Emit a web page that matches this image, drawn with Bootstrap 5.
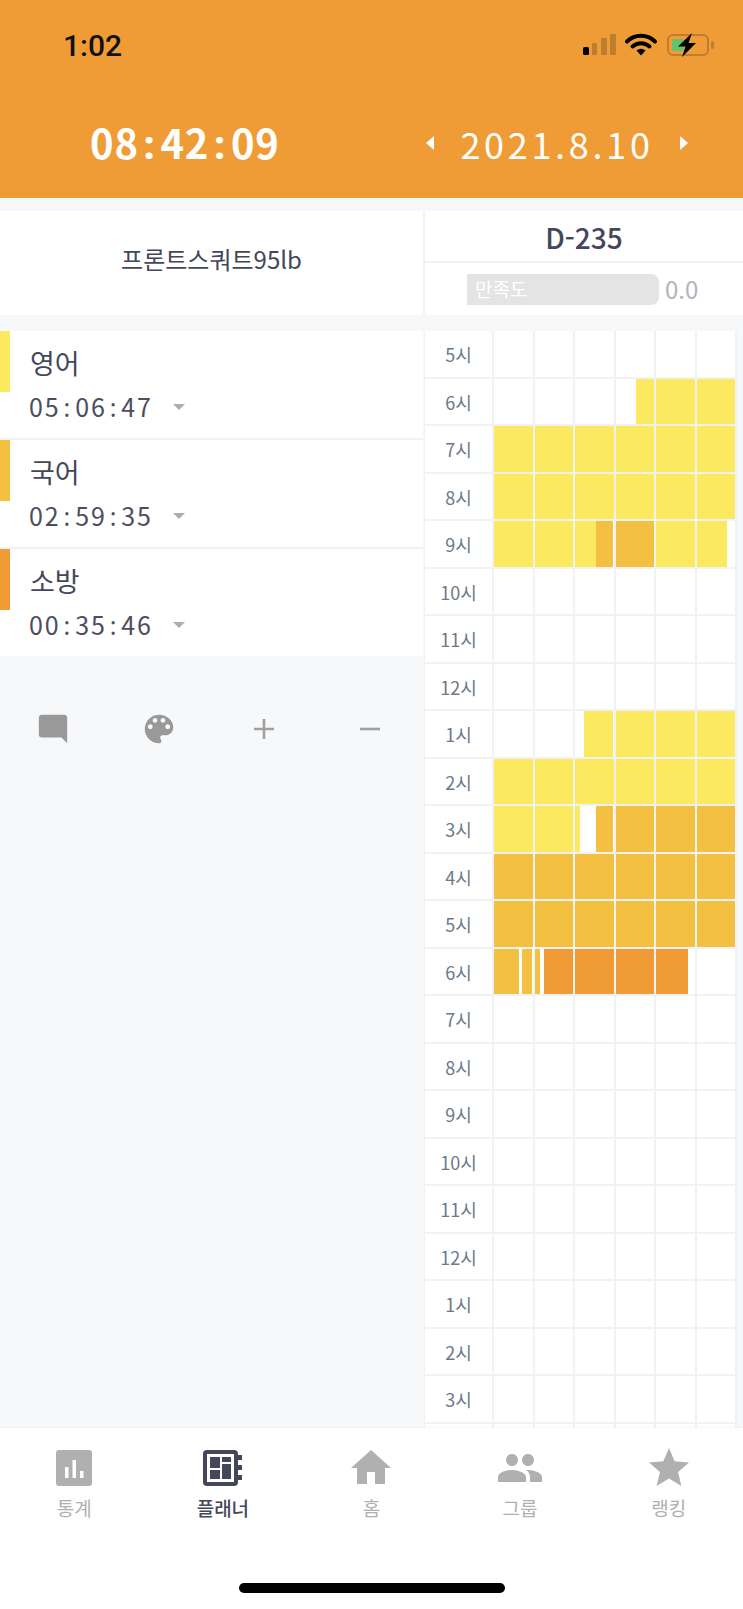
<!DOCTYPE html>
<html lang="ko">
<head>
<meta charset="UTF-8">
<title>플래너</title>
<link rel="stylesheet" href="https://cdn.jsdelivr.net/npm/bootstrap@5.3.3/dist/css/bootstrap.min.css">
<style>
    html, body { height: 1609px; overflow: hidden; }
    body {
        background: #f7f8fa;
        color: #44465a;
        font-family: "Noto Sans CJK KR", "Noto Sans", sans-serif;
    }
    .colon-mark { font-family: "Noto Sans", sans-serif; margin: 0 .12em; }
    .app-head { background: #f09c36; height: 198px; }
    .status-row { height: 90px; padding-left: 63px; padding-right: 28px; }
    .status-time { font-family: Roboto, sans-serif; font-weight: 500; font-size: 30px; color: #111; }
    .clock-row { height: 104px; color: #fff; padding-top: 2px; }
    .clock-left { width: 425px; padding-left: 90px; font-size: 40px; font-weight: 700; letter-spacing: .8px; }
    .clock-date { font-size: 36px; letter-spacing: 3.7px; width: 244px; text-align: center; }
    .goal-row { height: 104px; margin-top: 13px; background: #fff; }
    .goal-left { width: 423px; font-size: 24px; padding-bottom: 8px; }
    .goal-right { width: 320px; border-left: 2px solid #f1f2f6; }
    .dday { height: 52px; font-size: 28px; font-weight: 500; border-bottom: 2px solid #f1f2f6; padding-top: 1px; }
    .mood-bar { width: 192px; height: 31px; margin-left: 42px; background: #e4e4e4; border-radius: 0 8px 8px 0; color: #fff; font-size: 19px; padding-left: 8px; }
    .mood-val { margin-left: 6px; font-size: 24px; color: #b2b5ba; }
    .main-row { height: 1097px; margin-top: 16px; overflow: hidden; }
    .left-col { width: 423px; }
    .subject-row { height: 109px; background: #fff; border-bottom: 2px solid #f1f2f6; }
    .subject-row:last-child { height: 107px; border-bottom: 0; }
    .subject-mark { width: 10px; height: 61px; }
    .subject-name { font-size: 27px; line-height: 34px; padding-top: 15px; }
    .subject-time { font-size: 25px; letter-spacing: 1.9px; line-height: 34px; margin-left: -1px; padding-top: 9px; color: #4c4e60; }
    .subject-caret { width: 0; height: 0; margin-left: 20px; border: 6px solid transparent; border-top: 6px solid #aeaeae; border-bottom: 0; }
    .tool-row { padding-top: 53px; }
    .tool-cell { width: 106px; height: 40px; }
    .time-grid { width: 313px; margin-left: 1px; border-left: 1px solid #f1f2f6; background: #fff; align-self: flex-start; }
    .hour-row { height: 47.5px; border-bottom: 2px solid #f1f2f6; }
    .hour-label { width: 69px; font-size: 18px; color: #6d7988; border-right: 2px solid #f1f2f6; padding-top: 2px; }
    .hour-cell { flex: 1 1 0; border-right: 2px solid #f1f2f6; }
    .c1 { background: #fbe960; }
    .c2 { background: #f3c041; }
    .c3 { background: #f09b35; }
    .bottom-nav { height: 181px; background: #fff; position: relative; padding-top: 16px; box-shadow: 0 -1px 2px rgba(0,0,0,.03); }
    .nav-pick { flex: 1 1 0; color: #b0b0b0; font-size: 19px; line-height: 24px; }
    .nav-pick span { margin-top: 4px; }
    .nav-pick.on { color: #44465a; font-weight: 500; }
    .home-bar { width: 266px; height: 10px; background: #000; border-radius: 5px; margin: 63px auto 0; }
</style>
</head>
<body>
    <div class="app-head">
        <div class="status-row d-flex align-items-center justify-content-between">
            <div class="status-time">1:02</div>
            <svg width="132" height="24" viewBox="0 0 132 24">
                <rect x="0" y="14" width="6" height="8" rx="1.5" fill="#000"/>
                <rect x="9" y="10" width="5" height="12" rx="1" fill="#bd7f2f"/>
                <rect x="18" y="5" width="6" height="17" rx="1" fill="#bd7f2f"/>
                <rect x="27" y="1" width="6" height="21" rx="1" fill="#bd7f2f"/>
                <path d="M44 8.500A20 20 0 0 1 72 8.500M49.500 13.500A12.500 12.500 0 0 1 66.500 13.500" fill="none" stroke="#000" stroke-width="4" stroke-linecap="round"/>
                <path d="M53.500 17.500Q58 14 62.500 17.500L58 22.500z" fill="#000"/>
                <rect x="85" y="2" width="40" height="20" rx="5" fill="none" stroke="#bd7f2f" stroke-width="2"/>
                <rect x="128" y="8" width="3" height="8" rx="1.500" fill="#bd7f2f"/>
                <rect x="89" y="6" width="12" height="12" rx="2" fill="#5fc46e"/>
                <path d="M109 0L95 13.500H102.500L99 24L113 10H105.500z" fill="#000"/>
            </svg>
        </div>
        <div class="clock-row d-flex align-items-center">
            <div class="clock-left">08<span class="colon-mark">:</span>42<span class="colon-mark">:</span>09</div>
            <svg width="10" height="14" viewBox="0 0 10 14"><path d="M9 0V14L1 7z" fill="#fff"/></svg>
            <div class="clock-date">2021.8.10</div>
            <svg width="10" height="14" viewBox="0 0 10 14"><path d="M1 0V14L9 7z" fill="#fff"/></svg>
        </div>
    </div>

    <div class="goal-row d-flex">
        <div class="goal-left d-flex align-items-center justify-content-center">프론트스쿼트95lb</div>
        <div class="goal-right">
            <div class="dday d-flex align-items-center justify-content-center">D-235</div>
            <div class="d-flex align-items-center mt-2">
                <div class="mood-bar d-flex align-items-center">만족도</div>
                <div class="mood-val">0.0</div>
            </div>
        </div>
    </div>

    <div class="main-row d-flex">
        <div class="left-col">
            <div id="subjects"></div>
            <div class="tool-row d-flex">
                <div class="tool-cell d-flex align-items-center justify-content-center">
                    <svg width="34" height="34" viewBox="0 0 24 24" fill="#999"><path d="M4 2H20c1.100 0 2 .9 2 2V22l-4-4H4c-1.100 0-2-.9-2-2V4c0-1.100.9-2 2-2z"/></svg>
                </div>
                <div class="tool-cell d-flex align-items-center justify-content-center">
                    <svg width="38" height="38" viewBox="0 0 24 24" fill="#999"><path d="M12 3c-4.970 0-9 4.030-9 9s4.030 9 9 9c.83 0 1.500-.67 1.500-1.500 0-.39-.15-.74-.39-1.010-.23-.26-.38-.61-.38-.99 0-.83.67-1.500 1.500-1.500H16c2.760 0 5-2.240 5-5 0-4.420-4.030-8-9-8zm-5.500 9c-.83 0-1.500-.67-1.500-1.500S5.670 9 6.500 9 8 9.670 8 10.500 7.330 12 6.500 12zm3-4C8.670 8 8 7.330 8 6.500S8.670 5 9.500 5s1.500.67 1.500 1.500S10.330 8 9.500 8zm5 0c-.83 0-1.500-.67-1.500-1.500S13.670 5 14.500 5s1.500.67 1.500 1.500S15.330 8 14.500 8zm3 4c-.83 0-1.500-.67-1.500-1.500S16.670 9 17.500 9s1.500.67 1.500 1.500-.67 1.500-1.500 1.500z"/></svg>
                </div>
                <div class="tool-cell d-flex align-items-center justify-content-center">
                    <svg width="22" height="22" viewBox="0 0 22 22"><path d="M11 1V21M1 11H21" stroke="#a0a0a0" stroke-width="2.600"/></svg>
                </div>
                <div class="tool-cell d-flex align-items-center justify-content-center">
                    <svg width="22" height="22" viewBox="0 0 22 22"><path d="M1 11H21" stroke="#a0a0a0" stroke-width="2.600"/></svg>
                </div>
            </div>
        </div>
        <div class="time-grid" id="timeGrid"></div>
    </div>

    <div class="bottom-nav">
        <div class="d-flex">
            <div class="nav-pick d-flex flex-column align-items-center">
                <svg width="48" height="48" viewBox="0 0 48 48"><rect x="6" y="6" width="36" height="36" rx="3" fill="#b0b0b0"/><path d="M15 23h3.500v11H15zM22.500 16H26v18h-3.500zM30 27h3.500v7H30z" fill="#fff"/></svg>
                <span>통계</span>
            </div>
            <div class="nav-pick on d-flex flex-column align-items-center">
                <svg width="48" height="48" viewBox="0 0 48 48">
                    <rect x="4" y="6" width="35" height="36" rx="4" fill="#44465a"/>
                    <rect x="8" y="10" width="27" height="28" fill="#fff"/>
                    <path d="M11 13h10v11H11zM23 13h9v5H23zM23 20h9v15H23zM11 26h10v9H11z" fill="#44465a"/>
                    <path d="M39 11h4v5h-4zM39 21h4v5h-4zM39 31h4v5h-4z" fill="#44465a"/>
                </svg>
                <span>플래너</span>
            </div>
            <div class="nav-pick d-flex flex-column align-items-center">
                <svg width="48" height="48" viewBox="0 0 24 24" fill="#b0b0b0"><path d="M10 20v-6h4v6h5v-8h3L12 3 2 12h3v8z"/></svg>
                <span>홈</span>
            </div>
            <div class="nav-pick d-flex flex-column align-items-center">
                <svg width="48" height="48" viewBox="0 0 24 24" fill="#b0b0b0"><path d="M16 11c1.660 0 2.990-1.340 2.990-3S17.660 5 16 5c-1.660 0-3 1.340-3 3s1.340 3 3 3zm-8 0c1.660 0 2.990-1.340 2.990-3S9.660 5 8 5C6.340 5 5 6.340 5 8s1.340 3 3 3zm0 2c-2.330 0-7 1.170-7 3.500V19h14v-2.500c0-2.330-4.670-3.500-7-3.500zm8 0c-.29 0-.62.02-.97.05 1.160.84 1.970 1.970 1.970 3.450V19h6v-2.500c0-2.330-4.670-3.500-7-3.500z"/></svg>
                <span>그룹</span>
            </div>
            <div class="nav-pick d-flex flex-column align-items-center">
                <svg width="48" height="48" viewBox="0 0 24 24" fill="#b0b0b0"><path d="M12 17.270L18.180 21l-1.640-7.030L22 9.240l-7.190-.61L12 2 9.190 8.630 2 9.240l5.460 4.730L5.820 21z"/></svg>
                <span>랭킹</span>
            </div>
        </div>
        <div class="home-bar"></div>
    </div>

    <script>
        const subjects = [
            { nome: '영어', tempo: '05:06:47', cor: 'c1' },
            { nome: '국어', tempo: '02:59:35', cor: 'c2' },
            { nome: '소방', tempo: '00:35:46', cor: 'c3' }
        ];
        document.getElementById('subjects').innerHTML = subjects.map(s => `
            <div class="subject-row d-flex">
                <div class="subject-mark ${s.cor}"></div>
                <div class="ms-3 ps-1">
                    <div class="subject-name">${s.nome}</div>
                    <div class="subject-time d-flex align-items-center"><span>${s.tempo.replaceAll(':', '<span class="colon-mark">:</span>')}</span><i class="subject-caret"></i></div>
                </div>
            </div>`).join('');

        // each cell: a colour number, or a list of [colour, width %] pieces (0 = empty)
        // last row runs under the nav, its label is not visible
        const hours = ['5','6','7','8','9','10','11','12','1','2','3','4','5','6','7','8','9','10','11','12','1','2','3',''];
        const fills = {
            1: [0, 0, 0, [[0, 52], [1, 48]], 1, 1],
            2: [1, 1, 1, 1, 1, 1],
            3: [1, 1, 1, 1, 1, 1],
            4: [1, 1, [[1, 55], [2, 45]], 2, 1, [[1, 78], [0, 22]]],
            8: [0, 0, [[0, 24], [1, 76]], 1, 1, 1],
            9: [1, 1, 1, 1, 1, 1],
            10: [1, 1, [[1, 13], [0, 42], [2, 45]], 2, 2, 2],
            11: [2, 2, 2, 2, 2, 2],
            12: [2, 2, 2, 2, 2, 2],
            13: [[[2, 65], [0, 9], [2, 26]], [[2, 14], [0, 10], [3, 76]], 3, 3, [[3, 83], [0, 17]], 0]
        };
        document.getElementById('timeGrid').innerHTML = hours.map((h, i) => {
            const row = fills[i] || [0, 0, 0, 0, 0, 0];
            const cells = row.map(c => {
                if (Array.isArray(c)) {
                    return '<div class="hour-cell d-flex">' + c.map(p =>
                        `<div class="${p[0] ? 'c' + p[0] : ''}" style="width:${p[1]}%"></div>`).join('') + '</div>';
                }
                return `<div class="hour-cell ${c ? 'c' + c : ''}"></div>`;
            }).join('');
            const label = h ? h + '시' : '';
            return `<div class="hour-row d-flex"><div class="hour-label d-flex align-items-center justify-content-center">${label}</div>${cells}</div>`;
        }).join('');
    </script>
    <script src="https://cdn.jsdelivr.net/npm/bootstrap@5.3.3/dist/js/bootstrap.bundle.min.js"></script>
</body>
</html>
